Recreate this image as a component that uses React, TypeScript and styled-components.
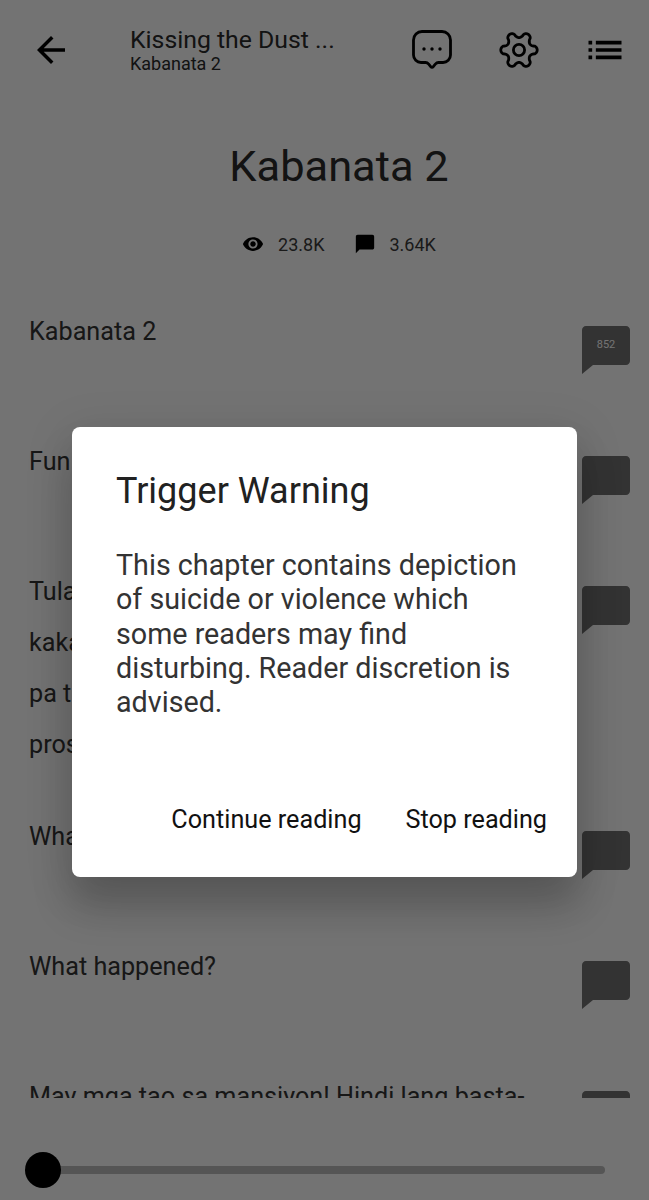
import React from 'react';
import styled, { createGlobalStyle } from 'styled-components';

const rows = [
  { lines: ['Kabanata 2'], count: '852' },
  { lines: ['Fun fact!'] },
  { lines: ['Tulad ng dati, hindi pa rin ako', 'kakain ng almusal sa labas dahil', 'pa tulog pa ang lahat sa mansyon,', 'prostitute na yata ako.'] },
  { lines: ['What the hell is this?'] },
  { lines: ['What happened?'] },
  { lines: ['May mga tao sa mansiyon! Hindi lang basta-'] },
];

// six rounded lobes, wider than tall like the app's settings icon
const gearPoints = () => {
  const pts: string[] = [];
  for (let i = 0; i < 180; i++) {
    const t = (i / 180) * Math.PI * 2;
    const c = Math.cos(6 * t);
    const r = 15.3 + 2.9 * Math.sign(c) * Math.pow(Math.abs(c), 0.6);
    pts.push(`${(20 + r * Math.cos(t)).toFixed(2)},${(20 + r * Math.sin(t)).toFixed(2)}`);
  }
  return pts.join(' ');
};

function App() {
  return (
    <Page>
      <GlobalStyle />
      <Header>
        <BackZone>
          <svg width="42" height="42" viewBox="0 0 24 24" fill="#000">
            <path d="M20 11H7.83l5.59-5.59L12 4l-8 8 8 8 1.41-1.41L7.83 13H20v-2z" />
          </svg>
        </BackZone>
        <Titles>
          <BookTitle>Kissing the Dust ...</BookTitle>
          <ChapterName>Kabanata 2</ChapterName>
        </Titles>
        <IconZone>
          <svg width="40" height="40" viewBox="0 0 40 40" fill="none" stroke="#000" strokeWidth="2.8" strokeLinejoin="round">
            <path d="M10 1.500h20a8.500 8.500 0 0 1 8.500 8.500v15a7.500 7.500 0 0 1-7.500 7.500h-4.500c-1.500 0-2.300.6-3.200 1.600l-2 2.500c-.8 1-1.800 1-2.600 0l-2-2.500c-.9-1-1.700-1.600-3.200-1.600H9A7.500 7.500 0 0 1 1.500 25V10A8.500 8.500 0 0 1 10 1.500z" />
            <circle cx="12" cy="19" r="1.700" fill="#000" stroke="none" />
            <circle cx="20" cy="19" r="1.700" fill="#000" stroke="none" />
            <circle cx="28" cy="19" r="1.700" fill="#000" stroke="none" />
          </svg>
        </IconZone>
        <IconZone>
          <svg width="40" height="40" viewBox="0 0 40 40" fill="none" stroke="#000" strokeWidth="2.800" strokeLinejoin="round">
            <polygon points={gearPoints()} />
            <circle cx="20" cy="20" r="5.600" />
          </svg>
        </IconZone>
        <IconZone>
          <svg width="44" height="44" viewBox="0 0 24 24" fill="#000">
            <path d="M3 13h2v-2H3v2zm0 4h2v-2H3v2zm0-8h2V7H3v2zm4 4h14v-2H7v2zm0 4h14v-2H7v2zM7 7v2h14V7H7z" />
          </svg>
        </IconZone>
      </Header>

      <ChapterTitle>Kabanata 2</ChapterTitle>

      <Stats>
        <Stat>
          <svg width="22" height="22" viewBox="0 0 24 24" fill="#000">
            <path d="M12 4.500C7 4.500 2.730 7.610 1 12c1.730 4.390 6 7.500 11 7.500s9.270-3.110 11-7.500c-1.730-4.390-6-7.500-11-7.500zM12 17c-2.760 0-5-2.240-5-5s2.240-5 5-5 5 2.240 5 5-2.240 5-5 5zm0-8c-1.660 0-3 1.340-3 3s1.340 3 3 3 3-1.340 3-3-1.340-3-3-3z" />
          </svg>
          <StatText>23.8K</StatText>
        </Stat>
        <Stat>
          <svg width="22" height="22" viewBox="0 0 24 24" fill="#000">
            <path d="M20 2H4c-1.100 0-2 .9-2 2v18l4-4h14c1.100 0 2-.9 2-2V4c0-1.100-.9-2-2-2z" />
          </svg>
          <StatText>3.64K</StatText>
        </Stat>
      </Stats>

      <Reader>
        {rows.map((row, i) => (
          <Row key={i}>
            <Paragraph>
              {row.lines.map((line) => (
                <div key={line}>{line}</div>
              ))}
            </Paragraph>
            <Bubble>
              <svg width="48" height="48" viewBox="0 0 48 48" fill="#717171">
                <path d="M4 0h40c2.200 0 4 1.800 4 4v31c0 2.200-1.800 4-4 4H11L0 48V4c0-2.200 1.800-4 4-4z" />
              </svg>
              {row.count && <BubbleCount>{row.count}</BubbleCount>}
            </Bubble>
          </Row>
        ))}
      </Reader>

      <SliderBar>
        <Track />
        <Thumb />
      </SliderBar>

      <Overlay>
        <Dialog>
          <DialogTitle>Trigger Warning</DialogTitle>
          <DialogBody>
            This chapter contains depiction of suicide or violence which some readers may find disturbing. Reader
            discretion is advised.
          </DialogBody>
          <Actions>
            <ActionButton>Continue reading</ActionButton>
            <ActionButton>Stop reading</ActionButton>
          </Actions>
        </Dialog>
      </Overlay>
    </Page>
  );
}

const GlobalStyle = createGlobalStyle`
  html, body {
    margin: 0;
    padding: 0;
    background: #fff;
  }
  * {
    box-sizing: border-box;
  }
`;

const Page = styled.div`
  position: relative;
  width: 649px;
  height: 1200px;
  overflow: hidden;
  background: #fff;
  color: #2a2a2a;
  font-family: Roboto, "Liberation Sans", sans-serif;
`;

const Header = styled.div`
  display: flex;
  align-items: center;
  height: 100px;
`;

const BackZone = styled.div`
  width: 130px;
  padding-left: 30px;
  display: flex;
  align-items: center;
`;

const Titles = styled.div`
  width: 259px;
  margin-bottom: 3px;
  display: flex;
  flex-direction: column;
`;

const BookTitle = styled.div`
  font-size: 24.800px;
  line-height: 29px;
  color: #2a2a2a;
  white-space: nowrap;
`;

const ChapterName = styled.div`
  font-size: 18px;
  line-height: 19px;
  color: #2a2a2a;
`;

const IconZone = styled.div`
  width: 86.600px;
  display: flex;
  justify-content: center;
  align-items: center;
`;

const ChapterTitle = styled.h1`
  margin: 39px 0 0 29px;
  font-size: 43.400px;
  font-weight: 400;
  line-height: 56px;
  text-align: center;
  color: #2a2a2a;
`;

const Stats = styled.div`
  display: flex;
  justify-content: center;
  gap: 29px;
  margin: 35px 0 0 29px;
  height: 28px;
`;

const Stat = styled.div`
  display: flex;
  align-items: center;
  gap: 14px;
`;

const StatText = styled.span`
  font-size: 18px;
  color: #3a3a3a;
`;

const Reader = styled.div`
  margin-top: 47px;
  height: 793px;
  overflow: hidden;
`;

const Row = styled.div`
  display: flex;
  justify-content: space-between;
  align-items: flex-start;
  min-height: 130px;
  padding: 0 19px 0 29px;
  &:nth-child(3) {
    padding-bottom: 40px;
  }
`;

const Paragraph = styled.div`
  padding-top: 1px;
  font-size: 25.200px;
  line-height: 51px;
  color: #333;
  white-space: nowrap;
`;

const Bubble = styled.div`
  position: relative;
  width: 48px;
  height: 48px;
  margin-top: 21px;
`;

const BubbleCount = styled.span`
  position: absolute;
  top: 12px;
  left: 0;
  width: 48px;
  text-align: center;
  font-size: 11px;
  line-height: 14px;
  color: #fff;
`;

const SliderBar = styled.div`
  position: relative;
  height: 72px;
  margin-top: 36px;
  padding: 32px 44px 0 43px;
`;

const Track = styled.div`
  height: 8px;
  border-radius: 4px;
  background: #bcbcbc;
`;

const Thumb = styled.div`
  position: absolute;
  left: 25px;
  top: 18px;
  width: 36px;
  height: 36px;
  border-radius: 50%;
  background: #000;
`;

const Overlay = styled.div`
  position: absolute;
  inset: 0;
  background: rgba(0, 0, 0, 0.55);
  display: flex;
  justify-content: center;
  padding: 427px 72px 0;
`;

const Dialog = styled.div`
  width: 505px;
  height: 450px;
  padding: 40px 30px 0 44px;
  border-radius: 8px;
  background: #fff;
  box-shadow: 0 30px 40px 0 rgba(0, 0, 0, 0.2), 0 9px 46px 8px rgba(0, 0, 0, 0.08);
  display: flex;
  flex-direction: column;
`;

const DialogTitle = styled.div`
  font-size: 36px;
  line-height: 48px;
  color: #212121;
`;

const DialogBody = styled.div`
  margin-top: 33px;
  padding-right: 14px;
  font-size: 28.700px;
  line-height: 34.300px;
  color: #333;
`;

const Actions = styled.div`
  margin-top: auto;
  height: 72px;
  display: flex;
  justify-content: flex-end;
  gap: 44px;
`;

const ActionButton = styled.div`
  font-size: 25.200px;
  line-height: 30px;
  color: #111;
`;

export default App;
